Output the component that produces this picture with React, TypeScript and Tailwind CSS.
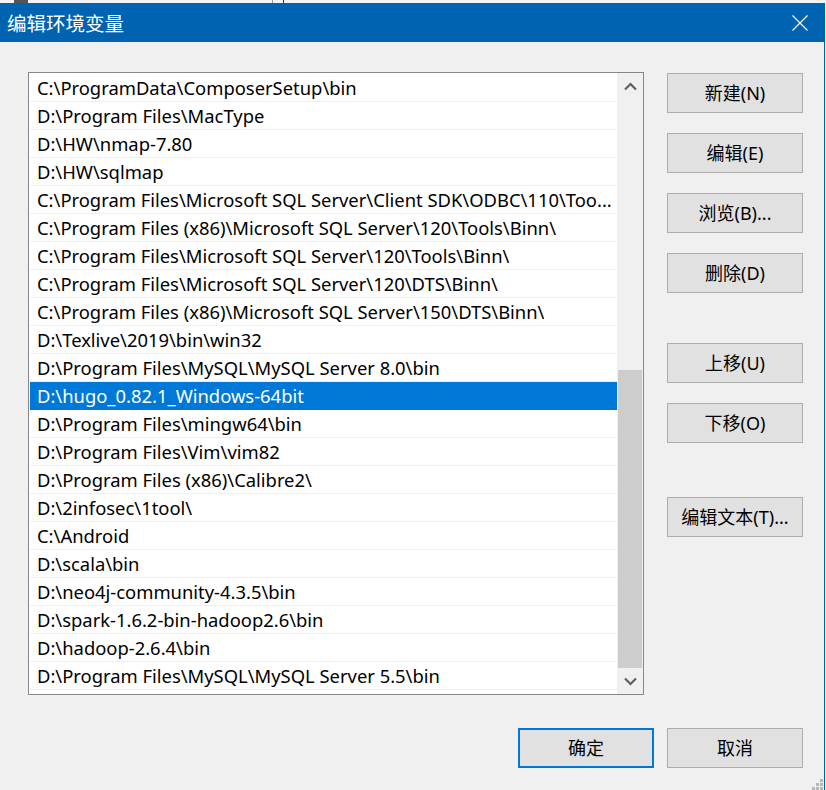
import React from "react";

const paths = [
  "C:\\ProgramData\\ComposerSetup\\bin",
  "D:\\Program Files\\MacType",
  "D:\\HW\\nmap-7.80",
  "D:\\HW\\sqlmap",
  "C:\\Program Files\\Microsoft SQL Server\\Client SDK\\ODBC\\110\\Too...",
  "C:\\Program Files (x86)\\Microsoft SQL Server\\120\\Tools\\Binn\\",
  "C:\\Program Files\\Microsoft SQL Server\\120\\Tools\\Binn\\",
  "C:\\Program Files\\Microsoft SQL Server\\120\\DTS\\Binn\\",
  "C:\\Program Files (x86)\\Microsoft SQL Server\\150\\DTS\\Binn\\",
  "D:\\Texlive\\2019\\bin\\win32",
  "D:\\Program Files\\MySQL\\MySQL Server 8.0\\bin",
  "D:\\hugo_0.82.1_Windows-64bit",
  "D:\\Program Files\\mingw64\\bin",
  "D:\\Program Files\\Vim\\vim82",
  "D:\\Program Files (x86)\\Calibre2\\",
  "D:\\2infosec\\1tool\\",
  "C:\\Android",
  "D:\\scala\\bin",
  "D:\\neo4j-community-4.3.5\\bin",
  "D:\\spark-1.6.2-bin-hadoop2.6\\bin",
  "D:\\hadoop-2.6.4\\bin",
  "D:\\Program Files\\MySQL\\MySQL Server 5.5\\bin",
];

const SELECTED = 11;

const Btn = ({ label, primary }: { label: string; primary?: boolean }) => (
  <button
    className={
      "w-[136px] h-[40px] bg-[#e1e1e1] text-[18px] text-black flex items-center justify-center " +
      (primary ? "border-2 border-[#0078d7]" : "border border-[#adadad]")
    }
  >
    {label}
  </button>
);

const Chevron = ({ down }: { down?: boolean }) => (
  <svg width="13" height="9" viewBox="0 0 13 9" className={down ? "rotate-180" : ""}>
    <path d="M1 7.5 L6.5 2 L12 7.5" fill="none" stroke="#606060" strokeWidth="2.2" />
  </svg>
);

export default function App() {
  return (
    <div
      className="w-[826px] h-[790px] bg-[#f0f0f0] relative overflow-hidden"
      style={{ fontFamily: '"Noto Sans", "Noto Sans CJK SC", sans-serif' }}
    >
      {/* window behind */}
      <div className="h-[3px] bg-[#f3f3f3] flex">
        <div className="w-[14px]" />
        <div className="w-[14px] bg-[#555]" />
        <div className="w-[244px]" />
        <div className="w-px bg-[#999]" />
        <div className="w-[10px]" />
        <div className="w-px bg-[#333]" />
      </div>

      <div className="w-[825px] h-[787px] border-r border-[#0063b1] flex flex-col">
        {/* title bar */}
        <div className="h-[39px] bg-[#0063b1] flex items-center justify-between pl-[7px] pr-[16px]">
          <span
            className="text-white text-[19.5px] leading-none"
            style={{ fontFamily: '"Noto Sans CJK SC", sans-serif' }}
          >
            编辑环境变量
          </span>
          <svg width="16" height="16" viewBox="0 0 16 16">
            <path d="M0.5 0.5 L15.5 15.5 M15.5 0.5 L0.5 15.5" stroke="white" strokeWidth="1.2" />
          </svg>
        </div>

        <div className="flex-1 flex flex-col pl-[28px] pt-[30px]">
          <div className="flex gap-[23px]">
            {/* list */}
            <div className="w-[616px] h-[623px] border border-[#828790] bg-white flex">
              <div className="flex-1 pt-[1px] pl-[1px] overflow-hidden">
                {paths.map((p, i) => (
                  <div
                    key={i}
                    className={
                      "h-[28px] border-b flex items-center pl-[7px] pr-[4px] text-[18.4px] whitespace-nowrap overflow-hidden " +
                      (i === SELECTED
                        ? "bg-[#0078d7] text-white border-[#0078d7]"
                        : "text-black border-[#efefef]")
                    }
                  >
                    <span className="truncate">{p}</span>
                  </div>
                ))}
              </div>
              {/* scrollbar */}
              <div className="w-[26px] bg-[#f0f0f0] flex flex-col">
                <div className="h-[27px] flex items-center justify-center">
                  <Chevron />
                </div>
                <div className="flex-1 flex flex-col justify-end px-[1px]">
                  <div className="h-[298px] bg-[#cdcdcd]" />
                </div>
                <div className="h-[26px] flex items-center justify-center">
                  <Chevron down />
                </div>
              </div>
            </div>

            {/* side buttons */}
            <div className="flex flex-col pt-[1px]">
              <div className="flex flex-col gap-[20px]">
                <Btn label="新建(N)" />
                <Btn label="编辑(E)" />
                <Btn label="浏览(B)..." />
                <Btn label="删除(D)" />
              </div>
              <div className="flex flex-col gap-[20px] mt-[50px]">
                <Btn label="上移(U)" />
                <Btn label="下移(O)" />
              </div>
              <div className="mt-[54px]">
                <Btn label="编辑文本(T)..." />
              </div>
            </div>
          </div>

          <div className="flex justify-end gap-[13px] mt-[33px] pr-[21px]">
            <Btn label="确定" primary />
            <Btn label="取消" />
          </div>
        </div>
      </div>

      {/* resize grip */}
      <div className="absolute right-[3px] bottom-0 grid grid-cols-3 gap-[1px]">
        <div className="w-[3px] h-[3px]" />
        <div className="w-[3px] h-[3px]" />
        <div className="w-[3px] h-[3px] bg-[#b8b8b8]" />
        <div className="w-[3px] h-[3px]" />
        <div className="w-[3px] h-[3px] bg-[#b8b8b8]" />
        <div className="w-[3px] h-[3px] bg-[#b8b8b8]" />
        <div className="w-[3px] h-[3px] bg-[#b8b8b8]" />
        <div className="w-[3px] h-[3px] bg-[#b8b8b8]" />
        <div className="w-[3px] h-[3px] bg-[#b8b8b8]" />
      </div>
    </div>
  );
}
